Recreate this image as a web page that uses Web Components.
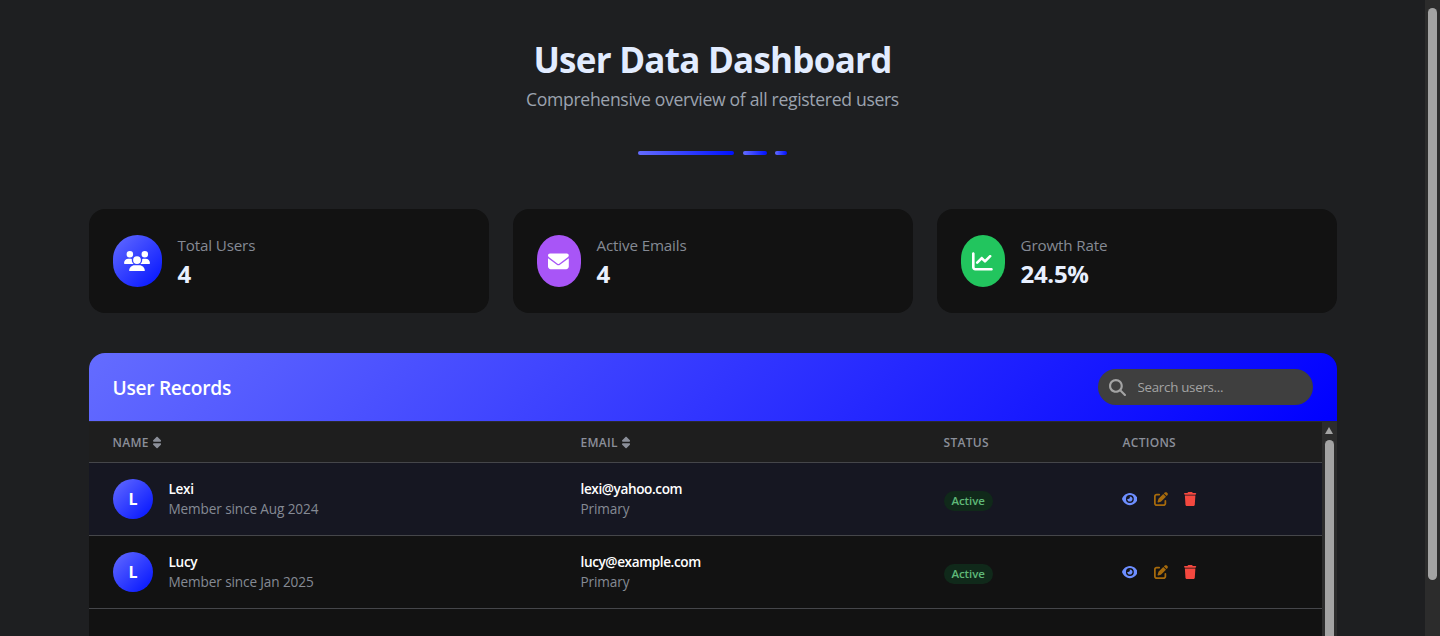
<!DOCTYPE html>
<html lang="en">
<head>
<meta charset="utf-8">
<title>User Data Dashboard</title>
<style>
  html, body { margin: 0; height: 636px; overflow: hidden; background: #1e1f21; }
  body { font-family: "Open Sans", "Noto Sans", sans-serif; }
</style>
</head>
<body>
<dash-app>
  <dash-header slot="header" title="User Data Dashboard" subtitle="Comprehensive overview of all registered users"></dash-header>
  <stat-card slot="stats" label="Total Users" value="4" icon="users" tone="blue" iconw="49"></stat-card>
  <stat-card slot="stats" label="Active Emails" value="4" icon="envelope" tone="purple" iconw="44"></stat-card>
  <stat-card slot="stats" label="Growth Rate" value="24.5%" icon="chart" tone="green" iconw="44"></stat-card>
  <records-panel slot="panel">
    <user-row name="Lexi" since="Aug 2024" email="lexi@yahoo.com" tint></user-row>
    <user-row name="Lucy" since="Jan 2025" email="lucy@example.com"></user-row>
  </records-panel>
</dash-app>

<script>
const html = String.raw;

const ICONS = {
  users: ["0 0 640 512", "M144 0a80 80 0 1 1 0 160A80 80 0 1 1 144 0zM512 0a80 80 0 1 1 0 160A80 80 0 1 1 512 0zM0 298.7C0 239.8 47.8 192 106.7 192h42.7c15.9 0 31 3.5 44.6 9.7c-1.3 7.2-1.9 14.7-1.9 22.3c0 38.2 16.8 72.5 43.3 96c-.2 0-.4 0-.7 0H21.3C9.6 320 0 310.4 0 298.7zM405.3 320c-.2 0-.4 0-.7 0c26.6-23.5 43.3-57.8 43.3-96c0-7.6-.7-15-1.9-22.3c13.6-6.3 28.7-9.7 44.6-9.7h42.7C592.2 192 640 239.8 640 298.7c0 11.8-9.6 21.3-21.3 21.3H405.3zM224 224a96 96 0 1 1 192 0 96 96 0 1 1 -192 0zM128 485.3C128 411.7 187.7 352 261.3 352H378.7C452.3 352 512 411.7 512 485.3c0 14.7-11.9 26.7-26.7 26.7H154.7c-14.7 0-26.7-11.9-26.7-26.7z"],
  envelope: ["0 0 512 512", "M48 64C21.5 64 0 85.5 0 112c0 15.1 7.1 29.3 19.2 38.4L236.8 313.6c11.4 8.5 27 8.5 38.4 0L492.8 150.4c12.1-9.1 19.2-23.3 19.2-38.4c0-26.5-21.5-48-48-48H48zM0 176V384c0 35.3 28.7 64 64 64H448c35.3 0 64-28.7 64-64V176L294.4 339.2c-22.8 17.1-54 17.1-76.8 0L0 176z"],
  chart: ["0 0 512 512", "M64 64c0-17.7-14.3-32-32-32S0 46.3 0 64V400c0 44.2 35.8 80 80 80H480c17.7 0 32-14.3 32-32s-14.3-32-32-32H80c-8.8 0-16-7.2-16-16V64zm406.6 86.6c12.5-12.5 12.5-32.8 0-45.3s-32.8-12.5-45.3 0L320 210.7l-57.4-57.4c-12.5-12.5-32.8-12.5-45.3 0l-112 112c-12.5 12.5-12.5 32.8 0 45.3s32.8 12.5 45.3 0L240 221.3l57.4 57.4c12.5 12.5 32.8 12.5 45.3 0l128-128z"],
  search: ["0 0 512 512", "M416 208c0 45.9-14.9 88.3-39.9 122.7L502.6 457.4c12.5 12.5 12.5 32.8 0 45.3s-32.8 12.5-45.3 0L330.7 376c-34.4 25.1-76.8 40-122.7 40C93.1 416 0 322.9 0 208S93.1 0 208 0S416 93.1 416 208zM208 352a144 144 0 1 0 0-288 144 144 0 1 0 0 288z"],
  sort: ["0 0 320 512", "M137.4 41.4c12.5-12.5 32.8-12.5 45.3 0l128 128c9.2 9.2 11.9 22.9 6.9 34.9s-16.6 19.8-29.6 19.8H32c-12.9 0-24.6-7.8-29.6-19.8s-2.7-25.7 6.9-34.9l128-128zm0 429.3l-128-128c-9.2-9.2-11.9-22.9-6.9-34.9s16.6-19.8 29.6-19.8H288c12.9 0 24.6 7.8 29.6 19.8s2.7 25.7-6.9 34.9l-128 128c-12.5 12.5-32.8 12.5-45.3 0z"],
  eye: ["0 0 576 512", "M288 32c-80.8 0-145.5 36.8-192.6 80.6C48.6 156 17.3 208 2.5 243.7c-3.3 7.9-3.3 16.7 0 24.6C17.3 304 48.6 356 95.4 399.4C142.5 443.2 207.2 480 288 480s145.5-36.8 192.6-80.6c46.8-43.5 78.1-95.4 93-131.1c3.3-7.9 3.3-16.7 0-24.6c-14.9-35.7-46.2-87.7-93-131.1C433.5 68.8 368.8 32 288 32zM144 256a144 144 0 1 1 288 0 144 144 0 1 1 -288 0zm144-64c0 35.3-28.7 64-64 64c-7.1 0-13.9-1.2-20.3-3.3c-5.5-1.8-11.9 1.6-11.7 7.4c.3 6.9 1.3 13.8 3.2 20.7c13.7 51.2 66.4 81.6 117.6 67.9s81.6-66.4 67.9-117.6c-11.1-41.5-47.8-69.4-88.6-71.1c-5.8-.2-9.2 6.1-7.4 11.7c2.1 6.4 3.3 13.2 3.3 20.3z"],
  edit: ["0 0 512 512", "M471.6 21.7c-21.9-21.9-57.3-21.9-79.2 0L362.3 51.7l97.9 97.9 30.1-30.1c21.9-21.9 21.9-57.3 0-79.2L471.6 21.7zm-299.2 220c-6.1 6.1-10.8 13.6-13.5 21.9l-29.6 88.8c-2.9 8.6-.6 18.1 5.8 24.6s15.9 8.7 24.6 5.8l88.8-29.6c8.2-2.7 15.7-7.4 21.9-13.5L437.7 172.3 339.7 74.3 172.4 241.7zM96 64C43 64 0 107 0 160V416c0 53 43 96 96 96H352c53 0 96-43 96-96V320c0-17.7-14.3-32-32-32s-32 14.3-32 32v96c0 17.7-14.3 32-32 32H96c-17.7 0-32-14.3-32-32V160c0-17.7 14.3-32 32-32h96c17.7 0 32-14.3 32-32s-14.3-32-32-32H96z"],
  trash: ["0 0 448 512", "M135.2 17.7L128 32H32C14.3 32 0 46.3 0 64S14.3 96 32 96H416c17.7 0 32-14.3 32-32s-14.3-32-32-32H320l-7.2-14.3C307.4 6.8 296.3 0 284.2 0H163.8c-12.1 0-23.2 6.8-28.6 17.7zM416 128H32L53.2 467c1.6 25.3 22.6 45 47.9 45H346.9c25.3 0 46.3-19.7 47.9-45L416 128z"],
};

function icon(name, height) {
  const [box, d] = ICONS[name];
  const parts = box.split(" ");
  const width = (height * parts[2]) / parts[3];
  return `<svg width="${width}" height="${height}" viewBox="${box}" fill="currentColor" aria-hidden="true"><path d="${d}"/></svg>`;
}

class DashApp extends HTMLElement {
  constructor() {
    super();
    this.attachShadow({ mode: "open" }).innerHTML = html`
      <style>
        :host { display: flex; height: 636px; color: #fff; }
        main { flex: 1; min-width: 0; height: 636px; overflow: hidden; }
        .wrap { width: 1248px; margin: 0 auto; padding-top: 40px; }
        .stats { display: grid; grid-template-columns: repeat(3, 400px); gap: 24px; margin-bottom: 40px; }
        .bar { width: 15px; background: #2c2c2c; padding: 8px 3px 0; box-sizing: border-box; flex: none; }
        .thumb { height: 572px; background: #a3a3a3; border-radius: 5px; }
      </style>
      <main>
        <div class="wrap">
          <slot name="header"></slot>
          <div class="stats"><slot name="stats"></slot></div>
          <slot name="panel"></slot>
        </div>
      </main>
      <div class="bar"><div class="thumb"></div></div>
    `;
  }
}

class DashHeader extends HTMLElement {
  connectedCallback() {
    this.attachShadow({ mode: "open" }).innerHTML = html`
      <style>
        :host { display: block; text-align: center; margin-bottom: 54px; }
        h1 { margin: 0; font-size: 35px; line-height: 40px; font-weight: 700; color: #e2ecff; letter-spacing: -0.75px; }
        p { margin: 7px 0 0; font-size: 17.6px; line-height: 24px; color: #9ca3af; letter-spacing: -0.33px; }
        .bars { display: flex; justify-content: center; gap: 8px; margin-top: 40px; }
        .bars i { display: block; height: 4px; border-radius: 2px; background: linear-gradient(90deg, #646cff, #0011ff); }
      </style>
      <h1>${this.getAttribute("title")}</h1>
      <p>${this.getAttribute("subtitle")}</p>
      <div class="bars">
        <i style="width:96px;margin-right:1px"></i><i style="width:24px"></i><i style="width:12px"></i>
      </div>
    `;
  }
}

class StatCard extends HTMLElement {
  connectedCallback() {
    const tones = {
      blue: "linear-gradient(135deg, #646cff, #0011ff)",
      purple: "#a855f7",
      green: "#22c55e",
    };
    this.attachShadow({ mode: "open" }).innerHTML = html`
      <style>
        :host { display: flex; align-items: center; gap: 16px; height: 104px; box-sizing: border-box; padding: 0 24px; background: #121212; border-radius: 16px; }
        .icon { height: 52px; flex: none; border-radius: 50% / 46%; display: flex; align-items: center; justify-content: center; color: #fff; }
        .text { padding-top: 3px; }
        .label { font-size: 15.2px; line-height: 20px; color: #858a94; letter-spacing: -0.15px; }
        .value { font-size: 24px; line-height: 32px; font-weight: 700; color: #e8f0ff; margin-top: 3px; letter-spacing: -0.3px; }
      </style>
      <div class="icon" style="width:${this.getAttribute("iconw")}px;background:${tones[this.getAttribute("tone")]}">
        ${icon(this.getAttribute("icon"), 20.8)}
      </div>
      <div class="text">
        <div class="label">${this.getAttribute("label")}</div>
        <div class="value">${this.getAttribute("value")}</div>
      </div>
    `;
  }
}

class RecordsPanel extends HTMLElement {
  constructor() {
    super();
    const sort = `<span class="sort">${icon("sort", 13)}</span>`;
    this.attachShadow({ mode: "open" }).innerHTML = html`
      <style>
        :host { display: block; border-radius: 16px 16px 0 0; overflow: hidden; background: #121212; }
        header { display: flex; align-items: center; justify-content: space-between; height: 69px; box-sizing: border-box; padding: 0 24px; background: linear-gradient(135deg, #646cff, #0000ff); border-bottom: 1px solid #2a2a2e; }
        h2 { margin: 0; font-size: 19.2px; font-weight: 600; color: #fff; letter-spacing: -0.3px; }
        .search { display: flex; align-items: center; gap: 12px; width: 215px; height: 36px; box-sizing: border-box; padding-left: 11px; border-radius: 18px; background: #3f3f3f; color: #a3a3a3; }
        .search input { all: unset; flex: 1; min-width: 0; padding-bottom: 1px; font-size: 13.33px; letter-spacing: -0.28px; color: #fff; }
        .search input::placeholder { color: #a3a3a3; }
        .body { display: flex; height: 240px; }
        .table { flex: 1; min-width: 0; }
        .head { display: grid; grid-template-columns: 468px 363px 179px 1fr; height: 41px; box-sizing: border-box; align-items: center; background: #1e1e1e; border-bottom: 1px solid #45464a; font-size: 12px; font-weight: 600; letter-spacing: 0.3px; color: #8b8f99; }
        .head > span { padding-left: 24px; display: flex; align-items: center; gap: 4px; }
        .sort { display: inline-flex; }
        .track { width: 15px; flex: none; background: #2c2c2c; display: flex; flex-direction: column; align-items: center; }
        .arrow { width: 0; height: 0; margin-top: 5px; border: 4.5px solid transparent; border-top: 0; border-bottom: 7px solid #a3a3a3; }
        .thumb { width: 9px; flex: 1; margin-top: 6px; background: #a3a3a3; border-radius: 5px 5px 0 0; }
      </style>
      <header>
        <h2>User Records</h2>
        <label class="search">${icon("search", 17)}<input placeholder="Search users..." aria-label="Search users"></label>
      </header>
      <div class="body">
        <div class="table">
          <div class="head">
            <span>NAME ${sort}</span><span>EMAIL ${sort}</span><span>STATUS</span><span>ACTIONS</span>
          </div>
          <slot></slot>
        </div>
        <div class="track"><div class="arrow"></div><div class="thumb"></div></div>
      </div>
    `;
  }
}

class UserRow extends HTMLElement {
  connectedCallback() {
    const name = this.getAttribute("name");
    this.attachShadow({ mode: "open" }).innerHTML = html`
      <style>
        :host { display: grid; grid-template-columns: 468px 363px 179px 1fr; align-items: center; height: 73px; box-sizing: border-box; border-bottom: 1px solid #45464a; background: #121212; }
        :host([tint]) { background: #161722; }
        .cell { padding-left: 24px; }
        .user { display: flex; align-items: center; gap: 16px; }
        .avatar { width: 40px; height: 40px; box-sizing: border-box; padding-left: 1px; border-radius: 50%; display: flex; align-items: center; justify-content: center; background: linear-gradient(135deg, #646cff, #0011ff); font-size: 16px; font-weight: 700; color: #fff; }
        .name { font-size: 13.6px; line-height: 20px; font-weight: 600; color: #fff; letter-spacing: -0.3px; }
        .mail { font-size: 13.6px; line-height: 20px; font-weight: 560; color: #fff; letter-spacing: -0.4px; }
        .sub { font-size: 13.6px; line-height: 20px; color: #858a94; letter-spacing: -0.12px; }
        .pill { display: inline-block; padding: 0 8px; height: 20px; line-height: 20px; border-radius: 10px; background: #10291a; color: #5fb878; font-size: 11.5px; font-weight: 600; letter-spacing: -0.1px; }
        .actions { display: flex; align-items: center; gap: 16px; margin-left: -1px; }
        .actions span { display: inline-flex; }
        .actions .edit { margin-left: 1px; }
        .view { color: #6d8eff; } .edit { color: #a66a0c; } .del { color: #f4483f; }
      </style>
      <div class="cell user">
        <div class="avatar">${name[0]}</div>
        <div>
          <div class="name">${name}</div>
          <div class="sub">Member since ${this.getAttribute("since")}</div>
        </div>
      </div>
      <div class="cell">
        <div class="mail">${this.getAttribute("email")}</div>
        <div class="sub">Primary</div>
      </div>
      <div class="cell"><span class="pill">Active</span></div>
      <div class="cell actions">
        <span class="view">${icon("eye", 14)}</span>
        <span class="edit">${icon("edit", 14)}</span>
        <span class="del">${icon("trash", 14)}</span>
      </div>
    `;
  }
}

customElements.define("dash-app", DashApp);
customElements.define("dash-header", DashHeader);
customElements.define("stat-card", StatCard);
customElements.define("records-panel", RecordsPanel);
customElements.define("user-row", UserRow);
</script>
</body>
</html>
